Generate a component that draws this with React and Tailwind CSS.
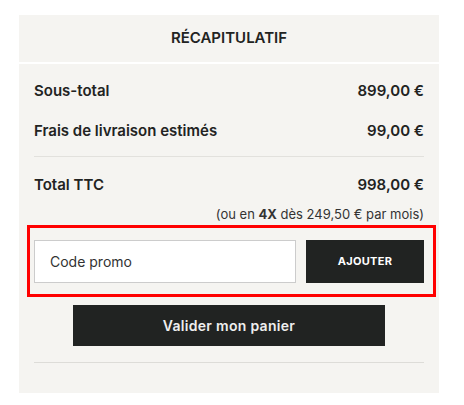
import React, { useState } from 'react';

function Row({ label, value, className = '' }) {
  return (
    <div className={`flex items-center justify-between ${className}`}>
      <span>{label}</span>
      <span>{value}</span>
    </div>
  );
}

export default function App() {
  const [code, setCode] = useState('');

  return (
    <div className="w-[464px] h-[405px] bg-white pt-[15px] pl-[19px]" style={{ fontFamily: 'Inter, "Liberation Sans", sans-serif' }}>
      <div className="w-[420px] h-[378px] flex flex-col text-[#222322]">
        {/* En-tête */}
        <div className="h-[47px] bg-[#f5f4f1] flex items-center justify-center text-[15px] font-semibold">
          RÉCAPITULATIF
        </div>
        <div className="h-[2px] bg-white" />

        {/* Contenu */}
        <div className="flex-1 bg-[#f5f4f1] px-[15px] flex flex-col">
          <div className="text-[15px] font-semibold">
            <Row label="Sous-total" value="899,00 €" className="h-[22px] mt-[16px]" />
            <Row label="Frais de livraison estimés" value="99,00 €" className="h-[22px] mt-[18px]" />
          </div>

          <div className="h-px bg-[#e2e1dd] mt-[14px]" />

          <Row label="Total TTC" value="998,00 €" className="h-[22px] mt-[17px] text-[15px] font-semibold" />
          <div className="text-right text-[13px] text-[#333] mt-[10px] h-[16px] leading-[16px]">
            (ou en <span className="font-bold">4X</span> dès 249,50 € par mois)
          </div>

          {/* Code promo */}
          <div className="-ml-[7px] -mr-[12px] mt-[3px] border-[3px] border-[#ff0000] h-[72px] pl-[4px] pr-[9px] flex items-center gap-[10px]">
            <input
              type="text"
              value={code}
              onChange={(e) => setCode(e.target.value)}
              placeholder="Code promo"
              className="w-[262px] h-[43px] bg-white border border-[#cccccc] px-[15px] text-[14px] text-[#333] placeholder:text-[#333] outline-none"
            />
            <button className="w-[118px] h-[43px] bg-[#212322] text-white text-[11px] font-bold tracking-[0.3px]">
              AJOUTER
            </button>
          </div>

          <button className="mx-auto mt-[8px] w-[312px] h-[41px] bg-[#212322] text-[#eeeeee] text-[14px] font-semibold tracking-[0.3px]">
            Valider mon panier
          </button>

          <div className="h-px bg-[#dddcd8] mt-[16px]" />
        </div>
      </div>
    </div>
  );
}
